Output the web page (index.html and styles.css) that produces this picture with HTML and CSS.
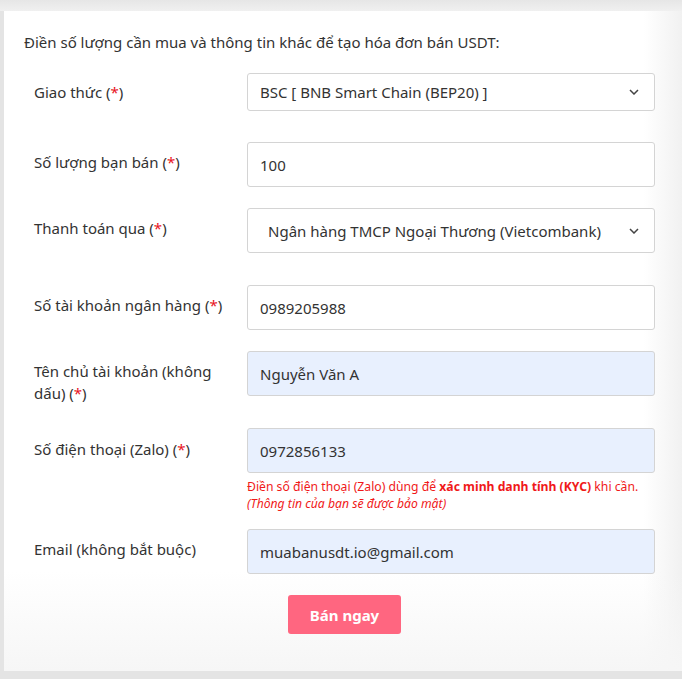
FILE: index.html
```html
<!DOCTYPE html>
<html lang="vi">
<head>
<meta charset="utf-8">
<title>Bán USDT</title>
<link rel="stylesheet" href="styles.css">
</head>
<body>
<div class="card">
  <p class="intro">Điền số lượng cần mua và thông tin khác để tạo hóa đơn bán USDT:</p>
  <form class="form">
    <div class="row row-1">
      <label class="label">Giao thức (<span class="req">*</span>)</label>
      <div class="field select short"><span class="val">BSC [ BNB Smart Chain (BEP20) ]</span>
        <svg class="chev" width="10" height="6" viewBox="0 0 10 6"><path d="M1 1l4 4 4-4" fill="none" stroke="#444" stroke-width="1.5"/></svg></div>
    </div>
    <div class="row row-2">
      <label class="label">Số lượng bạn bán (<span class="req">*</span>)</label>
      <input class="field" type="text" value="100">
    </div>
    <div class="row row-3">
      <label class="label">Thanh toán qua (<span class="req">*</span>)</label>
      <div class="field select"><span class="val indent">Ngân hàng TMCP Ngoại Thương (Vietcombank)</span>
        <svg class="chev" width="10" height="6" viewBox="0 0 10 6"><path d="M1 1l4 4 4-4" fill="none" stroke="#444" stroke-width="1.5"/></svg></div>
    </div>
    <div class="row row-4">
      <label class="label">Số tài khoản ngân hàng (<span class="req">*</span>)</label>
      <input class="field" type="text" value="0989205988">
    </div>
    <div class="row row-5">
      <label class="label"><span class="line">Tên chủ tài khoản (không</span><span class="line">dấu) (<span class="req">*</span>)</span></label>
      <input class="field filled" type="text" value="Nguyễn Văn A">
    </div>
    <div class="row row-6">
      <label class="label">Số điện thoại (Zalo) (<span class="req">*</span>)</label>
      <div class="col">
        <input class="field filled" type="text" value="0972856133">
        <p class="help"><span class="line">Điền số điện thoại (Zalo) dùng để <b>xác minh danh tính (KYC)</b> khi cần.</span><i class="line">(Thông tin của bạn sẽ được bảo mật)</i></p>
      </div>
    </div>
    <div class="row row-7">
      <label class="label">Email (không bắt buộc)</label>
      <input class="field filled" type="text" value="muabanusdt.io@gmail.com">
    </div>
    <div class="actions">
      <button type="button" class="btn">Bán ngay</button>
    </div>
  </form>
</div>
</body>
</html>
```

FILE: styles.css
```css
html, body {
  margin: 0;
  padding: 0;
}
body {
  background: linear-gradient(to bottom, #e6e6e6, #f0f0f0 11px, #e4e4e4 11px);
  font-family: "Noto Sans", "Liberation Sans", sans-serif;
  color: #333;
  height: 679px;
  overflow: hidden;
}
.card {
  margin: 11px 0 0 4px;
  height: 660px;
  box-sizing: border-box;
  background:
    linear-gradient(to bottom, rgba(248,248,248,0) 560px, #f6f6f6 660px),
    linear-gradient(to right, #fff 640px, #f1f1f1 678px);
  padding: 20px 0 0 20px;
}
.intro {
  margin: 0;
  font-size: 15px;
  line-height: 22px;
  color: #333;
}
.form {
  margin-top: 20px;
  width: 631px;
}
.row {
  display: flex;
  align-items: flex-start;
}
.label {
  width: 223px;
  flex: none;
  box-sizing: border-box;
  padding: 9px 14px 0 10px;
  font-size: 15px;
  line-height: 22px;
  color: #333;
}
.line { display: block; }
.req { color: #e8141e; }
.row-1 .label { padding-top: 8px; }
.row-2 { margin-top: 31px; }
.row-3 { margin-top: 21px; }
.row-4 { margin-top: 32px; }
.row-5 { margin-top: 21px; height: 45px; }
.row-5 .label { padding-top: 9px; }
.row-6 { margin-top: 32px; }
.row-6 .label { padding-top: 10px; }
.row-7 { margin-top: 17px; }
.col { display: flex; flex-direction: column; width: 408px; }
.field {
  width: 408px;
  height: 45px;
  box-sizing: border-box;
  border: 1px solid #d4d4d4;
  border-radius: 3px;
  background: #fff;
  padding: 0 12px;
  font: inherit;
  font-size: 15px;
  color: #333;
  outline: none;
  display: block;
  flex: none;
}
.field.short { height: 38px; }
.field.filled { background: #e8f0fe; }
.select {
  display: flex;
  align-items: center;
  justify-content: space-between;
  padding-right: 15px;
}
.val.indent { padding-left: 8px; }
.chev { flex: none; }
.help {
  margin: 5px 0 0 0;
  font-size: 12.2px;
  line-height: 17px;
  color: #f01919;
}
.help b { font-weight: 700; }
.actions {
  display: flex;
  margin-top: 21px;
  padding-left: 264px;
}
.btn {
  width: 113px;
  height: 39px;
  border: none;
  border-radius: 3px;
  background: #ff6680;
  color: #fff;
  font: inherit;
  font-size: 15px;
  font-weight: 700;
}
```
